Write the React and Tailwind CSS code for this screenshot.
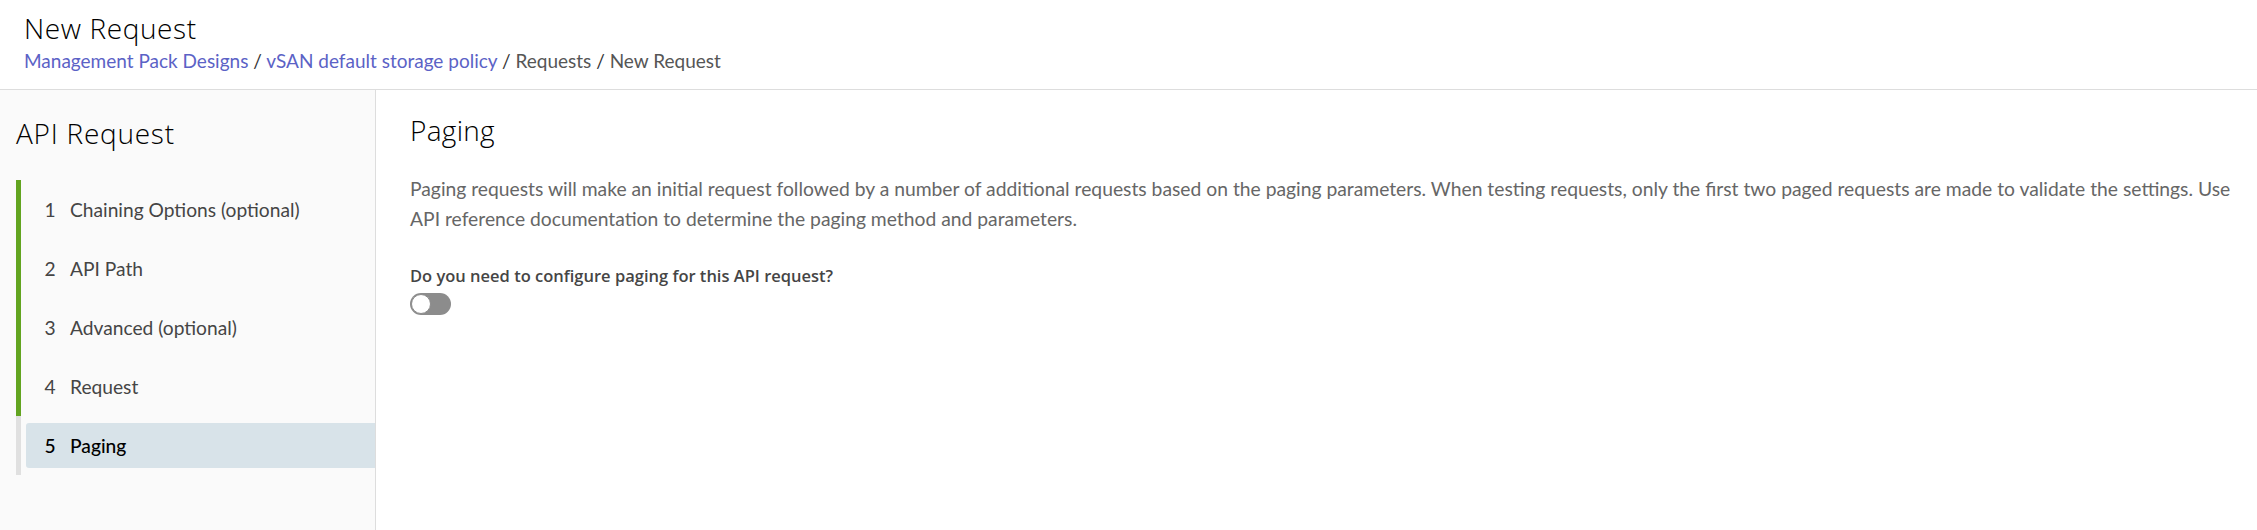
const steps = [
  { n: 1, label: "Chaining Options (optional)", done: true },
  { n: 2, label: "API Path", done: true },
  { n: 3, label: "Advanced (optional)", done: true },
  { n: 4, label: "Request", done: true },
  { n: 5, label: "Paging", done: false, active: true },
];

export default function App() {
  return (
    <div className="min-h-[530px] flex flex-col bg-white font-['Lato',sans-serif]">
      <header className="pt-[12px] pb-[16px] px-[24px] border-b border-[#dddddd]">
        <h1 className="font-['Open_Sans',sans-serif] text-[28px] leading-[32px] tracking-[0.6px] font-light text-black">New Request</h1>
        <nav className="mt-[5px] text-[19px] leading-[24px] text-[#565656]">
          <a className="text-[#5b62c6]">Management Pack Designs</a>
          <span className="text-[#333333]"> / </span>
          <a className="text-[#5b62c6]">vSAN default storage policy</a>
          <span className="text-[#333333]"> / </span>
          <span>Requests</span>
          <span className="text-[#333333]"> / </span>
          <span>New Request</span>
        </nav>
      </header>
      <div className="flex flex-1">
        <aside className="w-[376px] shrink-0 bg-[#fafafa] border-r border-[#dddddd] pt-[27px] pl-[16px] pb-[40px]">
          <h2 className="font-['Open_Sans',sans-serif] text-[28px] leading-[32px] tracking-[0.75px] font-light text-black">API Request</h2>
          <ol className="mt-[31px] flex flex-col">
            {steps.map((s) => (
              <li
                key={s.n}
                className={`h-[59px] flex border-l-[5px] ${s.done ? "border-[#62a420]" : "border-[#e0e0e0]"}`}
              >
                <div
                  className={`ml-[5px] flex-1 flex items-center pl-[17px] text-[19.2px] leading-[24px] ${
                    s.active ? "my-[7px] bg-[#d8e3e9] rounded-l-[3px] text-black font-medium" : "text-[#454545]"
                  }`}
                >
                  <span className="w-[14px] text-center">{s.n}</span>
                  <span className="ml-[13px]">{s.label}</span>
                </div>
              </li>
            ))}
          </ol>
        </aside>
        <main className="flex-1 pt-[23px] pl-[34px] pr-[4px]">
          <h2 className="font-['Open_Sans',sans-serif] text-[28px] leading-[34px] tracking-[0.3px] font-light text-black">Paging</h2>
          <p className="mt-[27px] text-[19.3px] leading-[30px] text-[#666666]">
            <span className="whitespace-nowrap">
              Paging requests will make an initial request followed by a number of additional requests based on the paging parameters. When testing requests, only the first two paged requests are made to validate the settings. Use
            </span>
            <br />
            API reference documentation to determine the paging method and parameters.
          </p>
          <div className="mt-[30px] font-['Open_Sans',sans-serif] text-[16.5px] leading-[24px] font-semibold text-[#454545]">
            Do you need to configure paging for this API request?
          </div>
          <button
            type="button"
            role="switch"
            aria-checked="false"
            className="mt-[5px] relative block w-[41px] h-[22px] rounded-full bg-[#8c8c8c]"
          >
            <span className="absolute left-[1px] top-[1px] w-[20px] h-[20px] rounded-full bg-white border border-[#8c8c8c]" />
          </button>
        </main>
      </div>
    </div>
  );
}
